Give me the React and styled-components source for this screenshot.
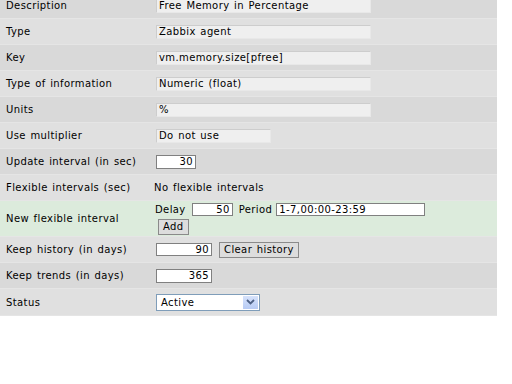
import React from "react";
import styled, { createGlobalStyle } from "styled-components";

const Global = createGlobalStyle`
  html, body { margin: 0; padding: 0; background: #ffffff; }
  body {
    font-family: "DejaVu Sans", Verdana, sans-serif;
    font-size: 10px;
    letter-spacing: 0.4px;
    word-spacing: 1px;
    color: #000;
    overflow: hidden;
  }
`;

const Table = styled.div`
  width: 497px;
  margin-top: -7px;
  display: flex;
  flex-direction: column;
`;

const Row = styled.div`
  display: grid;
  grid-template-columns: 154px 1fr;
  align-items: center;
  height: ${(p) => p.$h || 25}px;
  background: ${(p) => (p.$tone === "new" ? "#dcebdc" : p.$tone === "light" ? "#e0e0e0" : "#d9d9d9")};
  border-bottom: 1px solid #e5e5e5;
`;

const Label = styled.div`
  padding-left: 6px;
  white-space: nowrap;
`;

const Cell = styled.div`
  display: flex;
  flex-direction: ${(p) => (p.$column ? "column" : "row")};
  align-items: ${(p) => (p.$column ? "flex-start" : "center")};
  gap: ${(p) => p.$gap || 0}px;
  white-space: nowrap;
`;

const ReadOnly = styled.div`
  box-sizing: border-box;
  margin-left: 2px;
  width: ${(p) => p.$w || 215}px;
  height: 14px;
  line-height: 12px;
  padding-left: 2px;
  background: #efefef;
  border: 1px solid;
  border-color: #cdcdcd #e8e8e8 #e8e8e8 #cdcdcd;
`;

const Field = styled.div`
  box-sizing: border-box;
  margin-left: ${(p) => p.$ml ?? 2}px;
  width: ${(p) => p.$w}px;
  height: ${(p) => p.$h || 14}px;
  line-height: ${(p) => (p.$h || 14) - 2}px;
  padding: 0 2px;
  background: #ffffff;
  border: 1px solid #808080;
  text-align: ${(p) => (p.$left ? "left" : "right")};
`;

const Button = styled.div`
  box-sizing: border-box;
  margin-left: ${(p) => p.$ml || 0}px;
  height: 16px;
  line-height: 14px;
  padding: 0 4px;
  background: #dddddd;
  border: 1px solid #8a8a8a;
`;

const Select = styled.div`
  box-sizing: border-box;
  margin-left: 2px;
  width: 104px;
  height: 17px;
  border: 1px solid #7f9db9;
  background: #fff;
  display: flex;
  align-items: center;
  justify-content: space-between;
  padding-left: 4px;
`;

const Arrow = styled.div`
  width: 15px;
  height: 13px;
  margin-right: 1px;
  background: linear-gradient(#d6e2fb, #b7cbf4);
  display: flex;
  align-items: center;
  justify-content: center;
`;

const Inline = styled.span`
  margin-left: ${(p) => p.$ml || 0}px;
`;

export default function App() {
  return (
    <>
      <Global />
      <Table>
        <Row $tone="dark">
          <Label>Description</Label>
          <Cell><ReadOnly>Free Memory in Percentage</ReadOnly></Cell>
        </Row>
        <Row $tone="light">
          <Label>Type</Label>
          <Cell><ReadOnly>Zabbix agent</ReadOnly></Cell>
        </Row>
        <Row $tone="dark">
          <Label>Key</Label>
          <Cell><ReadOnly>vm.memory.size[pfree]</ReadOnly></Cell>
        </Row>
        <Row $tone="light">
          <Label>Type of information</Label>
          <Cell><ReadOnly>Numeric (float)</ReadOnly></Cell>
        </Row>
        <Row $tone="dark">
          <Label>Units</Label>
          <Cell><ReadOnly>%</ReadOnly></Cell>
        </Row>
        <Row $tone="light">
          <Label>Use multiplier</Label>
          <Cell><ReadOnly $w={115}>Do not use</ReadOnly></Cell>
        </Row>
        <Row $tone="dark">
          <Label>Update interval (in sec)</Label>
          <Cell><Field $w={40}>30</Field></Cell>
        </Row>
        <Row $tone="light">
          <Label>Flexible intervals (sec)</Label>
          <Cell>No flexible intervals</Cell>
        </Row>
        <Row $tone="new" $h={35}>
          <Label>New flexible interval</Label>
          <Cell $column $gap={3}>
            <Cell>
              <Inline $ml={1}>Delay</Inline>
              <Field $ml={6} $w={41} $h={13}>50</Field>
              <Inline $ml={6}>Period</Inline>
              <Field $ml={4} $w={149} $h={13} $left>1-7,00:00-23:59</Field>
            </Cell>
            <Button $ml={4}>Add</Button>
          </Cell>
        </Row>
        <Row $tone="light">
          <Label>Keep history (in days)</Label>
          <Cell>
            <Field $w={56} $h={13}>90</Field>
            <Button $ml={7}>Clear history</Button>
          </Cell>
        </Row>
        <Row $tone="dark">
          <Label>Keep trends (in days)</Label>
          <Cell><Field $w={56}>365</Field></Cell>
        </Row>
        <Row $tone="light" $h={26}>
          <Label>Status</Label>
          <Cell>
            <Select>
              <span>Active</span>
              <Arrow>
                <svg width="9" height="6" viewBox="0 0 9 6">
                  <path d="M1 1 L4.5 4.5 L8 1" fill="none" stroke="#4d6185" strokeWidth="1.8" />
                </svg>
              </Arrow>
            </Select>
          </Cell>
        </Row>
      </Table>
    </>
  );
}
